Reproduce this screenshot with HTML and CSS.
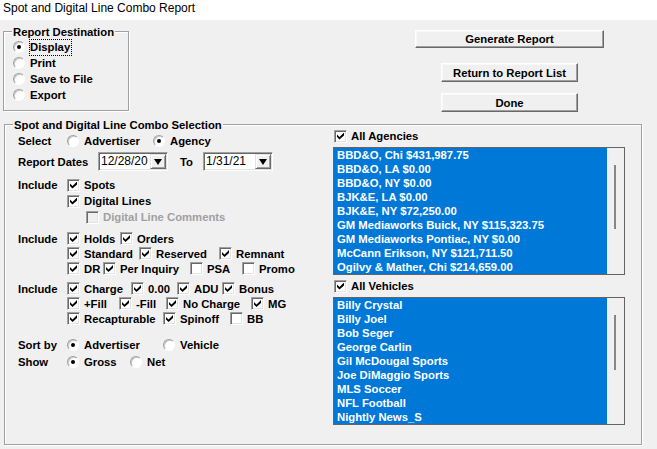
FILE: index.html
```html
<!DOCTYPE html>
<html>
<head>
<meta charset="utf-8">
<title>Spot and Digital Line Combo Report</title>
<link rel="stylesheet" href="styles.css">
</head>
<body>
<div class="titlebar">Spot and Digital Line Combo Report</div>

<div class="top">
  <div class="group dest">
    <span class="legend">Report Destination</span>
    <div class="row"><span class="rb on"></span><span class="focus">Display</span></div>
    <div class="row"><span class="rb"></span>Print</div>
    <div class="row"><span class="rb"></span>Save to File</div>
    <div class="row"><span class="rb"></span>Export</div>
  </div>
  <div class="actions">
    <button class="btn wide">Generate Report</button>
    <button class="btn ret">Return to Report List</button>
    <button class="btn done">Done</button>
  </div>
</div>

<div class="group main">
  <span class="legend">Spot and Digital Line Combo Selection</span>

  <div class="left">
    <div class="sec sec-select">
      <div class="row">
        <span class="lbl">Select</span>
        <span class="opt w86"><span class="rb"></span>Advertiser</span>
        <span class="opt"><span class="rb on"></span>Agency</span>
      </div>
      <div class="row dates">
        <span class="lbl lbl-dates">Report Dates</span>
        <span class="combo"><span class="val">12/28/20</span><span class="drop"></span></span>
        <span class="to">To</span>
        <span class="combo"><span class="val">1/31/21</span><span class="drop"></span></span>
      </div>
    </div>

    <div class="sec sec-types">
      <div class="row">
        <span class="lbl">Include</span>
        <span class="opt"><span class="cb on"></span>Spots</span>
      </div>
      <div class="row indent1">
        <span class="opt"><span class="cb on"></span>Digital Lines</span>
      </div>
      <div class="row indent2 disabled">
        <span class="opt"><span class="cb dis"></span>Digital Line Comments</span>
      </div>
    </div>

    <div class="sec sec-holds">
      <div class="row">
        <span class="lbl">Include</span>
        <span class="opt w53"><span class="cb on"></span>Holds</span>
        <span class="opt"><span class="cb on"></span>Orders</span>
      </div>
      <div class="row indent1">
        <span class="opt w72"><span class="cb on"></span>Standard</span>
        <span class="opt w80"><span class="cb on"></span>Reserved</span>
        <span class="opt"><span class="cb on"></span>Remnant</span>
      </div>
      <div class="row indent1">
        <span class="opt w36"><span class="cb on"></span>DR</span>
        <span class="opt w87"><span class="cb on"></span>Per Inquiry</span>
        <span class="opt w52"><span class="cb"></span>PSA</span>
        <span class="opt"><span class="cb"></span>Promo</span>
      </div>
    </div>

    <div class="sec sec-charge">
      <div class="row">
        <span class="lbl">Include</span>
        <span class="opt w64"><span class="cb on"></span>Charge</span>
        <span class="opt w46"><span class="cb on"></span>0.00</span>
        <span class="opt w45"><span class="cb on"></span>ADU</span>
        <span class="opt"><span class="cb on"></span>Bonus</span>
      </div>
      <div class="row indent1">
        <span class="opt w52"><span class="cb on"></span>+Fill</span>
        <span class="opt w47"><span class="cb on"></span>-Fill</span>
        <span class="opt w85"><span class="cb on"></span>No Charge</span>
        <span class="opt"><span class="cb on"></span>MG</span>
      </div>
      <div class="row indent1">
        <span class="opt w96"><span class="cb on"></span>Recapturable</span>
        <span class="opt w67"><span class="cb on"></span>Spinoff</span>
        <span class="opt"><span class="cb"></span>BB</span>
      </div>
    </div>

    <div class="sec sec-sort">
      <div class="row">
        <span class="lbl">Sort by</span>
        <span class="opt w96"><span class="rb on"></span>Advertiser</span>
        <span class="opt"><span class="rb"></span>Vehicle</span>
      </div>
      <div class="row">
        <span class="lbl">Show</span>
        <span class="opt w63"><span class="rb on"></span>Gross</span>
        <span class="opt"><span class="rb"></span>Net</span>
      </div>
    </div>
  </div>

  <div class="right">
    <div class="row all"><span class="opt"><span class="cb on"></span>All Agencies</span></div>
    <div class="list">
      <div class="items">
        <div>BBD&amp;O, Chi $431,987.75</div>
        <div>BBD&amp;O, LA $0.00</div>
        <div>BBD&amp;O, NY $0.00</div>
        <div>BJK&amp;E, LA $0.00</div>
        <div>BJK&amp;E, NY $72,250.00</div>
        <div>GM Mediaworks Buick, NY $115,323.75</div>
        <div>GM Mediaworks Pontiac, NY $0.00</div>
        <div>McCann Erikson, NY $121,711.50</div>
        <div>Ogilvy &amp; Mather, Chi $214,659.00</div>
      </div>
      <div class="scroll"><div class="thumb t1"></div></div>
    </div>
    <div class="row all"><span class="opt"><span class="cb on"></span>All Vehicles</span></div>
    <div class="list">
      <div class="items">
        <div>Billy Crystal</div>
        <div>Billy Joel</div>
        <div>Bob Seger</div>
        <div>George Carlin</div>
        <div>Gil McDougal Sports</div>
        <div>Joe DiMaggio Sports</div>
        <div>MLS Soccer</div>
        <div>NFL Football</div>
        <div>Nightly News_S</div>
      </div>
      <div class="scroll"><div class="thumb t2"></div></div>
    </div>
  </div>
</div>
</body>
</html>
```

FILE: styles.css
```css
html, body {
  margin: 0;
  padding: 0;
}
body {
  width: 657px;
  height: 449px;
  overflow: hidden;
  background: #f0f0f0;
  color: #000;
  font: bold 11.3px "Liberation Sans", Arial, sans-serif;
}

.titlebar {
  height: 20px;
  background: #fff;
  font: 12px "Liberation Sans", Arial, sans-serif;
  line-height: 16px;
  padding-left: 3px;
  box-sizing: border-box;
}

.top {
  display: flex;
  align-items: flex-start;
}

.group {
  position: relative;
  box-sizing: border-box;
  border: 1px solid #a0a0a0;
  box-shadow: 1px 1px 0 #fff, inset 1px 1px 0 #fff;
}
.legend {
  position: absolute;
  top: -7px;
  left: 8px;
  padding: 0 1px;
  background: #f0f0f0;
  line-height: 14px;
  white-space: nowrap;
}

.dest {
  margin: 11px 0 0 3px;
  width: 126px;
  height: 80px;
  padding: 7px 0 0 9px;
}
.dest .rb {
  margin-right: 5px;
}
.focus {
  outline: 1px dotted #000;
  outline-offset: 0;
  padding: 0 1px 0 0;
  line-height: 15px;
}

.actions {
  margin-left: 286px;
  padding-top: 10px;
  width: 189px;
  display: flex;
  flex-direction: column;
  align-items: center;
}
.btn {
  font: bold 11.3px "Liberation Sans", Arial, sans-serif;
  color: #000;
  background: #f0f0f0;
  box-sizing: border-box;
  width: 137px;
  height: 19px;
  padding: 0;
  border: 1px solid;
  border-color: #fff #696969 #696969 #fff;
  box-shadow: inset -1px -1px 0 #a0a0a0, inset 1px 1px 0 #f8f8f8;
}
.btn.wide {
  width: 189px;
  height: 18px;
}
.btn.ret {
  margin-top: 15px;
}
.btn.done {
  margin-top: 11px;
}

.main {
  margin: 12px 0 0 4px;
  width: 638px;
  height: 321px;
  display: flex;
  align-items: flex-start;
}

.row {
  display: flex;
  align-items: center;
  height: 16px;
  white-space: nowrap;
}

.left {
  width: 328px;
  padding: 8px 0 0 13px;
  box-sizing: border-box;
  flex: none;
}
.lbl {
  flex: none;
  width: 49px;
}
.lbl-dates {
  width: 80px;
}
.row.dates {
  margin-top: 3px;
  height: 19px;
}
.to {
  margin-left: 12px;
  width: 23px;
  flex: none;
}

.sec-types {
  margin-top: 6px;
}
.sec-holds {
  margin-top: 6px;
}
.sec-holds .row,
.sec-charge .row {
  height: 15px;
}
.sec-charge {
  margin-top: 5px;
}
.sec-sort {
  margin-top: 10px;
}
.sec-sort .row {
  height: 17px;
}

.indent1 {
  padding-left: 49px;
}
.indent2 {
  padding-left: 68px;
}
.disabled {
  color: #a0a0a0;
}

.opt {
  display: flex;
  align-items: center;
  flex: none;
  white-space: nowrap;
}
.w36 { width: 36px; }
.w45 { width: 45px; }
.w46 { width: 46px; }
.w47 { width: 47px; }
.w52 { width: 52px; }
.w53 { width: 53px; }
.w63 { width: 63px; }
.w64 { width: 64px; }
.w67 { width: 67px; }
.w72 { width: 72px; }
.w80 { width: 80px; }
.w85 { width: 85px; }
.w86 { width: 86px; }
.w87 { width: 87px; }
.w96 { width: 96px; }

/* classic checkbox */
.cb {
  position: relative;
  flex: none;
  width: 13px;
  height: 13px;
  box-sizing: border-box;
  margin-right: 4px;
  background: #fff;
  border: 1px solid;
  border-color: #a0a0a0 #fff #fff #a0a0a0;
  box-shadow: inset 1px 1px 0 #696969, inset -1px -1px 0 #e3e3e3;
}
.cb.on::after {
  content: "";
  position: absolute;
  left: 2px;
  top: 2px;
  width: 7px;
  height: 7px;
  background: #000;
  clip-path: polygon(0 2px, 2.5px 4.5px, 7px 0, 7px 3px, 2.5px 7px, 0 4.5px);
}
.cb.dis {
  background: #f0f0f0;
}

/* classic radio */
.rb {
  position: relative;
  flex: none;
  width: 12px;
  height: 12px;
  box-sizing: border-box;
  margin-right: 5px;
  border-radius: 50%;
  background: #fff;
  border: 1px solid;
  border-color: #a0a0a0 #fff #fff #a0a0a0;
  box-shadow: inset 1px 1px 0 #c8c8c8;
}
.opt .rb {
  margin-right: 5px;
}
.rb.on::after {
  content: "";
  position: absolute;
  left: 3px;
  top: 3px;
  width: 4px;
  height: 4px;
  border-radius: 50%;
  background: #000;
}

/* combo box */
.combo {
  display: flex;
  flex: none;
  width: 70px;
  height: 19px;
  box-sizing: border-box;
  padding: 1px;
  background: #fff;
  border: 1px solid;
  border-color: #a0a0a0 #fff #fff #a0a0a0;
  box-shadow: inset 1px 1px 0 #696969, inset -1px -1px 0 #e3e3e3;
}
.combo .val {
  flex: 1;
  font: 12px "Liberation Sans", Arial, sans-serif;
  line-height: 15px;
  padding-left: 1px;
}
.combo .drop {
  position: relative;
  flex: none;
  width: 16px;
  height: 15px;
  box-sizing: border-box;
  background: #f0f0f0;
  border: 1px solid;
  border-color: #e3e3e3 #696969 #696969 #e3e3e3;
  box-shadow: inset 1px 1px 0 #fff, inset -1px -1px 0 #a0a0a0;
}
.combo .drop::after {
  content: "";
  position: absolute;
  left: 3px;
  top: 4px;
  border-left: 4px solid transparent;
  border-right: 4px solid transparent;
  border-top: 6px solid #000;
}

/* right column */
.right {
  width: 292px;
  padding-top: 3px;
  flex: none;
}
.row.all {
  padding-left: 1px;
}
.row.all + .list {
  margin-top: 3px;
}
.list + .row.all {
  margin-top: 3px;
}
.list {
  display: flex;
  width: 292px;
  height: 128px;
  box-sizing: border-box;
  border: 1px solid #646464;
  background: #f0f0f0;
}
.items {
  flex: 1;
  background: #0078d7;
  color: #fff;
  padding-left: 3px;
  line-height: 14px;
  overflow: hidden;
}
.items div {
  height: 14px;
  white-space: nowrap;
}
.scroll {
  flex: none;
  width: 17px;
}
.thumb {
  width: 2px;
  margin: 17px 0 0 7px;
  background: #868686;
}
.thumb.t1 {
  height: 64px;
}
.thumb.t2 {
  height: 55px;
}
```
